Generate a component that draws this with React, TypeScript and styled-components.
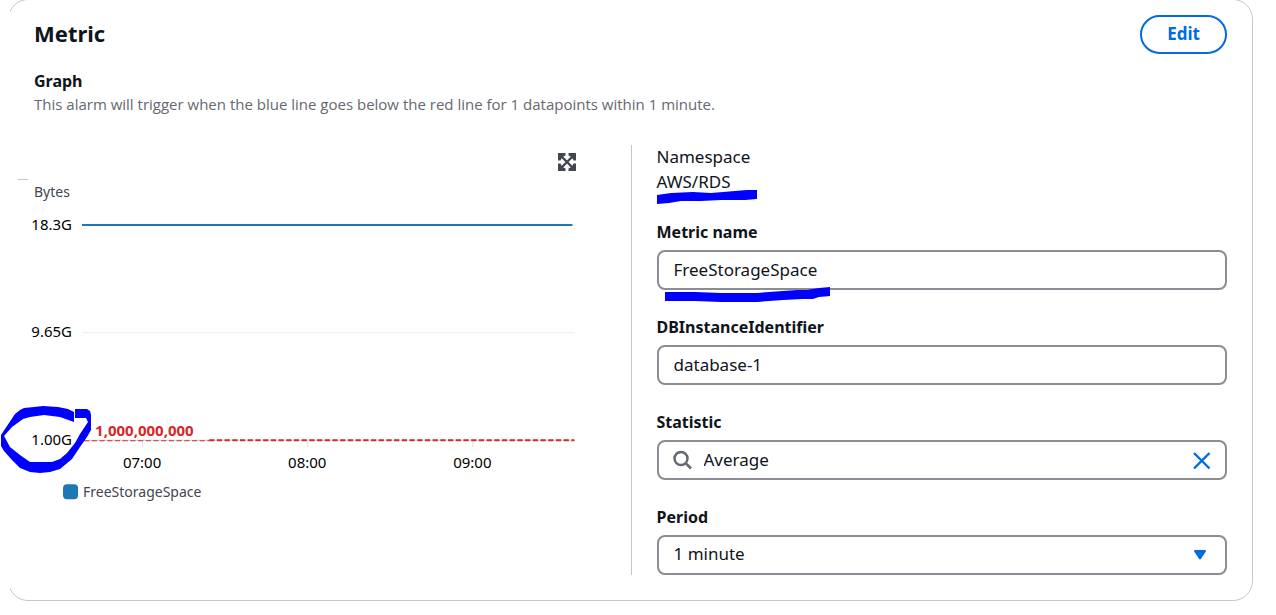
import React from "react";
import styled, { createGlobalStyle } from "styled-components";

const GlobalStyle = createGlobalStyle`
  * { box-sizing: border-box; }
  body {
    margin: 0;
    background: #ffffff;
    color: #0f141a;
    font-family: "Noto Sans", "Open Sans", sans-serif;
    font-size: 17px;
    line-height: 25px;
  }
`;

const Page = styled.main`
  position: relative;
  padding: 0 23px 14px 10px;
`;

const Clip = styled.div`
  overflow: hidden;
`;

const Panel = styled.section`
  margin: -1px 0 0 -2px;
  padding: 15px 25px 25px;
  border: 1px solid #c6c6cd;
  border-radius: 20px;
`;

const Header = styled.header`
  display: flex;
  justify-content: space-between;
  align-items: flex-start;
`;

const Title = styled.h2`
  margin: 0;
  font-size: 22px;
  line-height: 36px;
`;

const EditButton = styled.button`
  width: 87px;
  height: 39px;
  padding: 0 0 2px;
  border: 2px solid #006ce0;
  border-radius: 20px;
  background: #ffffff;
  color: #006ce0;
  font: 700 17px "Noto Sans", sans-serif;
  cursor: pointer;
`;

const Intro = styled.div`
  margin: 15px 0 30px;
`;

const Subtitle = styled.h3`
  margin: 0;
  font-size: 16px;
  line-height: 25px;
`;

const Description = styled.p`
  margin: 0;
  color: #656871;
  font-family: "Open Sans", sans-serif;
  font-size: 15px;
  line-height: 21px;
`;

const Columns = styled.div`
  display: grid;
  grid-template-columns: minmax(0, 1fr) minmax(0, 1fr);
`;

const GraphPane = styled.div`
  position: relative;
`;

const Chart = styled.svg`
  display: block;
  width: calc(100% + 16px);
  margin-left: -16px;
  font-size: 15px;
`;

const Caption = styled.text`
  fill: #424650;
  font-size: 14px;
`;

const ExpandButton = styled.button`
  position: absolute;
  top: 7px;
  right: 54px;
  width: 20px;
  height: 20px;
  padding: 0;
  border: 0;
  background: none;
  color: #424650;
  cursor: pointer;

  svg { display: block; }
`;

const Form = styled.form`
  display: flex;
  flex-direction: column;
  gap: 25px;
  padding-left: 25px;
  border-left: 1px solid #c6c6cd;
`;

const Field = styled.div`
  position: relative;
  display: flex;
  flex-direction: column;
  gap: 5px;
`;

const Label = styled.label`
  font-size: 16px;
  font-weight: 700;
`;

const Facts = styled.dl`
  position: relative;
  height: 50px;
  margin: 0;

  dt { line-height: 23px; }
  dd { margin: 0; line-height: 27px; }
`;

const Control = styled.div`
  display: flex;
  align-items: center;
  gap: 10px;
  height: 40px;
  padding: 0 13px 0 14px;
  border: 2px solid #8c8c94;
  border-radius: 8px;
  background: #ffffff;
`;

const Input = styled.input`
  flex: 1;
  min-width: 0;
  height: 34px;
  padding: 0 0 1px 1px;
  border: 0;
  outline: 0;
  background: none;
  color: inherit;
  font: inherit;
`;

const Select = styled.select`
  flex: 1;
  min-width: 0;
  height: 34px;
  padding: 0 0 3px 1px;
  border: 0;
  outline: 0;
  appearance: none;
  background: none;
  color: inherit;
  font: inherit;
`;

const ClearButton = styled.button`
  width: 20px;
  height: 20px;
  padding: 0;
  border: 0;
  background: none;
  cursor: pointer;

  svg { display: block; }
`;

const Mark = styled.svg<{ $left: number; $top: number }>`
  position: absolute;
  left: ${(p) => p.$left}px;
  top: ${(p) => p.$top}px;
  pointer-events: none;
`;

const hours = [
  { x: 124, label: "07:00" },
  { x: 289, label: "08:00" },
  { x: 454, label: "09:00" },
];

function MetricChart() {
  return (
    <Chart viewBox="0 0 612 370" role="img" aria-label="FreeStorageSpace in bytes">
      <path d="M0 34.5H10" stroke="#c6c6cd" />
      <Caption x="16" y="52">Bytes</Caption>
      <text x="54" y="85" textAnchor="end">18.3G</text>
      <text x="54" y="192" textAnchor="end">9.65G</text>
      <text x="54" y="300" textAnchor="end">1.00G</text>
      <path d="M64 80.5H556M64 187.5H556" stroke="#eeeeee" />
      <path d="M64 295H556" stroke="#cccccc" />
      <path d="M64 80H554" stroke="#1f77b4" strokeWidth="2" />
      {hours.map((h) => (
        <g key={h.label}>
          <path d={`M${h.x + 0.5} 296V302`} stroke="#dddddd" />
          <text x={h.x} y="323" textAnchor="middle">{h.label}</text>
        </g>
      ))}
      <path d="M66 295.5H191" stroke="#d62728" strokeDasharray="5.2 2.5" />
      <path d="M191 295H556" stroke="#d62728" strokeWidth="2" strokeDasharray="5.2 2.5" />
      <text x="77" y="291" fontWeight="700" fill="#d62728">1,000,000,000</text>
      <rect x="45" y="339" width="15" height="15" rx="4" fill="#1f77b4" />
      <Caption x="65" y="352">FreeStorageSpace</Caption>
    </Chart>
  );
}

export default function App() {
  return (
    <Page>
      <GlobalStyle />
      <Clip>
        <Panel>
          <Header>
            <Title>Metric</Title>
            <EditButton type="button">Edit</EditButton>
          </Header>
          <Intro>
            <Subtitle>Graph</Subtitle>
            <Description>
              This alarm will trigger when the blue line goes below the red line for 1 datapoints within 1 minute.
            </Description>
          </Intro>
          <Columns>
            <GraphPane>
              <MetricChart />
              <ExpandButton type="button" aria-label="Expand graph">
                <svg width="20" height="20" viewBox="0 0 20 20">
                  <path
                    d="M4 4L16 16M16 4L4 16"
                    stroke="currentColor"
                    strokeWidth="2.4"
                  />
                  <path
                    d="M1 1H8.5V3.5L6.5 4.5L4.5 6.5L3.5 8.5H1ZM19 1H11.5V3.5L13.5 4.5L15.5 6.5L16.5 8.5H19ZM1 19H8.5V16.5L6.5 15.5L4.5 13.5L3.5 11.5H1ZM19 19H11.5V16.5L13.5 15.5L15.5 13.5L16.5 11.5H19Z"
                    fill="currentColor"
                  />
                </svg>
              </ExpandButton>
            </GraphPane>
            <Form>
              <Facts>
                <dt>Namespace</dt>
                <dd>AWS/RDS</dd>
                <Mark $left={0} $top={44} width="101" height="16" aria-hidden="true">
                  <path
                    d="M0 6L14 4L36 3L54 4L78 2L90 1H100V10L88 11H64L44 12L24 12L12 14L0 15Z"
                    fill="#0000ff"
                  />
                </Mark>
              </Facts>
              <Field>
                <Label htmlFor="metric">Metric name</Label>
                <Control>
                  <Input id="metric" defaultValue="FreeStorageSpace" />
                </Control>
                <Mark $left={8} $top={66} width="166" height="18" aria-hidden="true">
                  <path
                    d="M0 6H30L56 7H92L118 5L132 4H142L154 2L165 1V10L154 11L148 13H138L118 14L92 16H56L30 15H0Z"
                    fill="#0000ff"
                  />
                </Mark>
              </Field>
              <Field>
                <Label htmlFor="instance">DBInstanceIdentifier</Label>
                <Control>
                  <Input id="instance" defaultValue="database-1" />
                </Control>
              </Field>
              <Field>
                <Label htmlFor="statistic">Statistic</Label>
                <Control>
                  <svg width="20" height="20" viewBox="0 0 20 20" fill="none" stroke="#656871" strokeWidth="2.5">
                    <circle cx="8" cy="8.5" r="6.5" />
                    <path d="M12.5 13L18 18.5" />
                  </svg>
                  <Input id="statistic" defaultValue="Average" />
                  <ClearButton type="button" aria-label="Clear statistic">
                    <svg width="20" height="20" viewBox="0 0 20 20" stroke="#006ce0" strokeWidth="2.4">
                      <path d="M2 3L17.5 18.5M17.5 3L2 18.5" />
                    </svg>
                  </ClearButton>
                </Control>
              </Field>
              <Field>
                <Label htmlFor="period">Period</Label>
                <Control>
                  <Select id="period" defaultValue="1">
                    <option value="1">1 minute</option>
                  </Select>
                  <svg width="20" height="20" viewBox="0 0 20 20" aria-hidden="true">
                    <path
                      d="M3 6H13L8 13.5Z"
                      fill="#006ce0"
                      stroke="#006ce0"
                      strokeWidth="2"
                      strokeLinejoin="round"
                    />
                  </svg>
                </Control>
              </Field>
            </Form>
          </Columns>
        </Panel>
      </Clip>
      <Mark $left={0} $top={400} width="96" height="76" aria-hidden="true">
        <path
          fill="#0000ff"
          fillRule="evenodd"
          d="M1 35L5 29L15 14L20 10L24 8L34 7L43 6L58 7L68 9L74 12V9H87L90 11L91 15V30L87 37L80 47L72 59L60 69L50 72L40 73L30 72L20 68L12 60L4 51L1 46ZM4 36L10 47L20 55L30 62H52L60 59L67 53L75 43L80 34L88 22L86 18H75L74 22L60 17L44 15L30 17L23 19L12 27Z"
        />
        <path d="M74.500 8V24" stroke="#ffffff" />
      </Mark>
    </Page>
  );
}
